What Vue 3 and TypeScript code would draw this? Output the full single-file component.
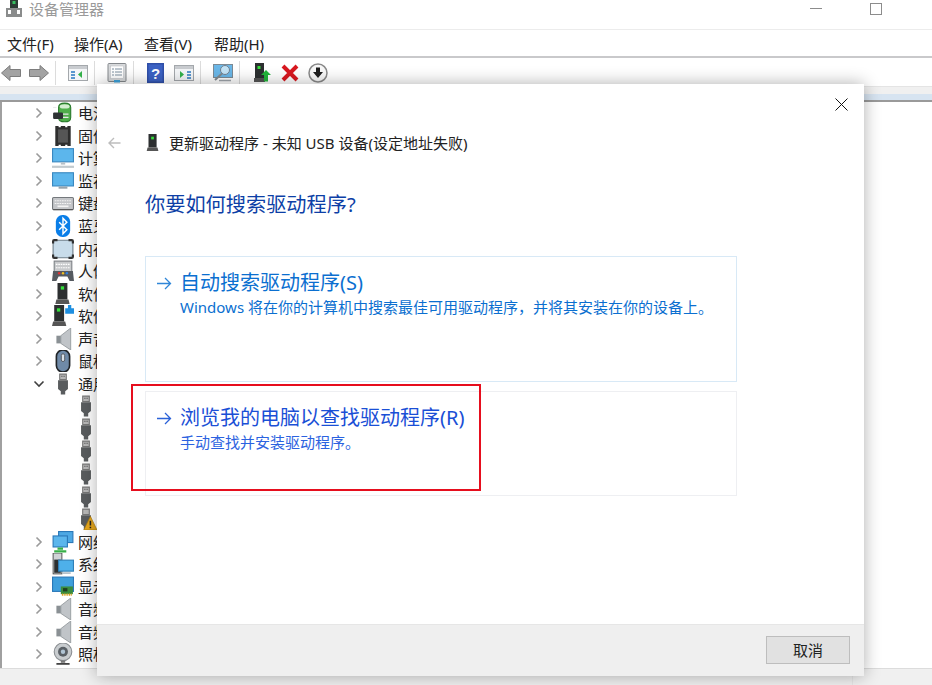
<script setup lang="ts">
interface Row { label: string; icon: string; chevron: 'right' | 'down' | 'none'; child?: boolean }

const menus: string[] = ['文件(F)', '操作(A)', '查看(V)', '帮助(H)']

const parents: [string, string][] = [
  ['电池', 'battery'], ['固件', 'chip'], ['计算机', 'computer'], ['监视器', 'monitor'],
  ['键盘', 'keyboard'], ['蓝牙', 'bluetooth'], ['内存技术设备', 'memory'], ['人体学输入设备', 'hid'],
  ['软件设备', 'device'], ['软件组件', 'component'], ['声音、视频和游戏控制器', 'speaker'], ['鼠标和其他指针设备', 'mouse'],
]
const after: [string, string][] = [
  ['网络适配器', 'network'], ['系统设备', 'system'], ['显示适配器', 'display'],
  ['音频输入和输出', 'speaker'], ['音频处理对象', 'speaker'], ['照相机', 'webcam'],
]
const rows: Row[] = [
  ...parents.map(([label, icon]): Row => ({ label, icon, chevron: 'right' })),
  { label: '通用串行总线控制器', icon: 'usb', chevron: 'down' },
  ...Array.from({ length: 5 }, (): Row => ({ label: 'USB 根集线器', icon: 'usb', chevron: 'none', child: true })),
  { label: '未知 USB 设备', icon: 'usbwarn', chevron: 'none', child: true },
  ...after.map(([label, icon]): Row => ({ label, icon, chevron: 'right' })),
]
</script>

<template>
  <div class="app">
    <svg class="defs" width="0" height="0" aria-hidden="true">
      <defs>
        <symbol id="i-back" viewBox="0 0 20 20"><path d="M0.500 10 9 2.500V6.500h10.500v7H9v4z" fill="#a3a3a3" stroke="#7d7d7d"/></symbol>
        <symbol id="i-fwd" viewBox="0 0 20 20"><path d="M19.500 10 11 2.500V6.500H.5v7H11v4z" fill="#a3a3a3" stroke="#7d7d7d"/></symbol>
        <symbol id="i-paneL" viewBox="0 0 20 20"><rect x=".5" y="2.500" width="19" height="15" fill="#f4f6f8" stroke="#a4a8ac"/><rect x="1" y="3" width="18" height="3" fill="#c9ccd0"/><rect x="3" y="8" width="4" height="2" fill="#5b97cf"/><rect x="3" y="11" width="4" height="2" fill="#5b97cf"/><rect x="3" y="14" width="4" height="2" fill="#5b97cf"/><path d="m10 11.500 4-3.500v7z" fill="#32b04a"/></symbol>
        <symbol id="i-paneR" viewBox="0 0 20 20"><rect x=".5" y="2.500" width="19" height="15" fill="#f4f6f8" stroke="#a4a8ac"/><rect x="1" y="3" width="18" height="3" fill="#c9ccd0"/><rect x="13" y="8" width="4" height="2" fill="#5b97cf"/><rect x="13" y="11" width="4" height="2" fill="#5b97cf"/><rect x="13" y="14" width="4" height="2" fill="#5b97cf"/><path d="m10 11.500-4-3.500v7z" fill="#32b04a"/></symbol>
        <symbol id="i-props" viewBox="0 0 20 20"><rect x="1" y=".5" width="18" height="18" rx="1" fill="#d8dadc" stroke="#85898d"/><rect x="3.500" y="3" width="13" height="12.500" fill="#fff" stroke="#b4b8bc" stroke-width=".5"/><path d="M5 6h2M8 6h7M5 9h2M8 9h7M5 12h2M8 12h7" stroke="#7d8fa0"/><rect x="7" y="17" width="6" height="2.500" fill="#3ea3dc"/></symbol>
        <symbol id="i-help" viewBox="0 0 20 20"><rect x="1" y="0" width="17" height="20" fill="#2f4fa8"/><rect x="2.500" y="1.500" width="14" height="17" fill="#3c62c4"/><text x="9.500" y="16" text-anchor="middle" class="q">?</text></symbol>
        <symbol id="i-scan" viewBox="0 0 20 20"><rect x=".5" y="1.500" width="19" height="13" fill="#6ab7e8" stroke="#7c8a94"/><circle cx="12" cy="7" r="4.500" fill="#c4e4f6" stroke="#708090"/><path d="m9 10.500-7 6.500" stroke="#808a90" stroke-width="2"/><path d="M6 17.500h12" stroke="#a0a6ac" stroke-width="1.500"/></symbol>
        <symbol id="i-update" viewBox="0 0 20 20"><rect x="3" y="0" width="9" height="15" fill="#2c2f30"/><rect x="5.500" y="3" width="3" height="3" fill="#36e03c"/><rect x="2" y="15" width="11" height="4" fill="#555"/><path d="M14 7l5 5h-3v6.500h-4V12H9z" fill="#22b53a"/></symbol>
        <symbol id="i-x" viewBox="0 0 20 20"><path d="m3 3 14 14M17 3 3 17" stroke="#d81820" stroke-width="4"/></symbol>
        <symbol id="i-down" viewBox="0 0 20 20"><circle cx="10" cy="10" r="9" fill="#f8f8f8" stroke="#8a8a8a" stroke-width="1.500"/><path d="M8 4.500h4V9h3l-5 6-5-6h3z" fill="#1c1c1c"/></symbol>

        <symbol id="i-battery" viewBox="0 0 20 20"><path d="M6 5c0-3 3-4 5.500-4S17 2 17 5v9c0 3-3 4-5.500 4S6 17 6 14z" fill="#4fae4a" stroke="#2a7a2c"/><ellipse cx="11.500" cy="4" rx="4.500" ry="2" fill="#d4eed0"/><rect x="1" y="9.500" width="9" height="6" rx="1" fill="#2e3234"/><path d="M10 11h5M10 14h5" stroke="#e8e8e8" stroke-width="1.200"/><path d="M1 5h3" stroke="#e8e8e8"/></symbol>
        <symbol id="i-chip" viewBox="0 0 20 20"><path d="M3 1h3v1h2V1h4v1h2V1h3v18h-3v-1h-2v1H8v-1H6v1H3z" fill="#2e2e2e"/><rect x="5.500" y="4" width="9" height="12" fill="#565656"/></symbol>
        <symbol id="i-computer" viewBox="0 0 20 20"><rect x=".5" y="1.500" width="19" height="12" fill="#5cb6ec" stroke="#3a88c0"/><path d="M8 14h4v2H8z" fill="#b8c0c6"/><path d="M0 17h20v2H0z" fill="#c2cace"/></symbol>
        <symbol id="i-monitor" viewBox="0 0 20 20"><rect x=".5" y="2.500" width="19" height="12" fill="#5cb6ec" stroke="#3a88c0"/><path d="M6 15h8v2H6z" fill="#98a4ac"/></symbol>
        <symbol id="i-keyboard" viewBox="0 0 20 20"><rect x=".5" y="5" width="19" height="11" rx="1" fill="#c4c6c9" stroke="#74787c"/><path d="M2.500 8h15M2.500 10.500h15" stroke="#f4f4f4" stroke-dasharray="1.500 .7"/><path d="M5 13h10" stroke="#f4f4f4" stroke-width="1.500"/><path d="M1 16h18" stroke="#555"/></symbol>
        <symbol id="i-bluetooth" viewBox="0 0 20 20"><rect x="3.500" y="0" width="13" height="20" rx="6" fill="#0a7ee8"/><path d="m6.500 6.500 7 7L10 17V3l3.500 3.500-7 7" fill="none" stroke="#fff" stroke-width="1.300"/></symbol>
        <symbol id="i-memory" viewBox="0 0 20 20"><rect x="1" y="2" width="18" height="16" rx="2" fill="#c8dcea" stroke="#6f7f8a"/><path d="M1 5V3q0-1 1-1h3M15 2h3q1 0 1 1v2M19 15v2q0 1-1 1h-3M5 18H2q-1 0-1-1v-2" fill="none" stroke="#333" stroke-width="2"/></symbol>
        <symbol id="i-hid" viewBox="0 0 20 20"><rect x="2" y="1" width="16" height="10" fill="#c8cacc" stroke="#7e8286"/><path d="M3.500 4h13M3.500 7h13" stroke="#fff" stroke-dasharray="1.500 .7"/><path d="M1 10h18l1 9h-4l-2-4H6l-2 4H0z" fill="#555a60"/><circle cx="6.500" cy="12" r="1.100" fill="#e03030"/><circle cx="10" cy="12" r="1.100" fill="#f0c020"/><circle cx="13.500" cy="12" r="1.100" fill="#3080e0"/></symbol>
        <symbol id="i-device" viewBox="0 0 20 20"><rect x="5" y="0" width="9" height="15" fill="#2c2f30"/><rect x="8" y="3" width="3" height="3" fill="#36e03c"/><path d="M4 15h11l1 4H3z" fill="#555"/></symbol>
        <symbol id="i-component" viewBox="0 0 20 20"><rect x="2" y="0" width="9" height="15" fill="#2c2f30"/><rect x="4.500" y="3" width="3" height="3" fill="#36e03c"/><path d="M1 15h11l1 4H0z" fill="#555"/><path d="M12 3h2.500V0h3v3H20v5h-8z" fill="#1e8fe0"/></symbol>
        <symbol id="i-speaker" viewBox="0 0 20 20"><path d="M4 7h4v7H4z" fill="#8a9094"/><path d="M8 7l9-7v20l-9-6z" fill="#c0c4c8" stroke="#8a9094" stroke-width=".7"/></symbol>
        <symbol id="i-mouse" viewBox="0 0 20 20"><rect x="4" y="0" width="12" height="20" rx="6" fill="#6f8aa8" stroke="#202428" stroke-width="1.500"/><rect x="8.500" y="3.500" width="3" height="7" rx="1.500" fill="#d8e0e8" stroke="#333" stroke-width=".6"/></symbol>
        <symbol id="i-usb" viewBox="0 0 20 20"><path d="M7 1h6v5H7z" fill="#b8b8b8" stroke="#777"/><path d="M8.500 3h1M10.500 3h1" stroke="#444"/><path d="M5.500 6.500h9v8l-2.500 2v3H8v-3l-2.500-2z" fill="#595c5e"/></symbol>
        <symbol id="i-usbwarn" viewBox="0 0 20 20"><path d="M7 1h6v5H7z" fill="#b8b8b8" stroke="#777"/><path d="M5.500 6.500h9v8l-2.500 2v3H8v-3l-2.500-2z" fill="#595c5e"/><path d="M14 7.500 20 20H8z" fill="#e8a81c" stroke="#a87a10" stroke-width=".6"/><path d="M14 11.500v4.500M14 17v1.500" stroke="#222" stroke-width="1.400"/></symbol>
        <symbol id="i-network" viewBox="0 0 20 20"><rect x="6" y="0.500" width="13" height="10" fill="#4da8e4" stroke="#2a78b8"/><rect x="1" y="4.500" width="13" height="10" fill="#5cb6ec" stroke="#2a78b8"/><path d="M5 15h5v2H5zM2 17.500h11v2H2z" fill="#38b048"/></symbol>
        <symbol id="i-system" viewBox="0 0 20 20"><rect x="1" y="0" width="8" height="19" fill="#d0d3d6" stroke="#444" stroke-width=".8"/><rect x="2" y="6" width="6" height="12" fill="#2c2f30"/><rect x="6" y="6.500" width="13.500" height="10" fill="#4eb0ea" stroke="#3080b8"/><path d="M9 17.500h8v1.500H9z" fill="#b0bcc4"/></symbol>
        <symbol id="i-display" viewBox="0 0 20 20"><rect x=".5" y="1" width="19" height="13" fill="#3f9fdc" stroke="#2a78b8"/><rect x="8" y="9.500" width="11" height="7" fill="#3a8c3e"/><rect x="10" y="11" width="4" height="3" fill="#1f3e22"/><path d="M9 17h9" stroke="#d8a020" stroke-width="2" stroke-dasharray="1 .6"/></symbol>
        <symbol id="i-webcam" viewBox="0 0 20 20"><circle cx="10" cy="8" r="8" fill="#c8cccf" stroke="#8a8e92"/><circle cx="10" cy="8" r="4.500" fill="#5a6066"/><circle cx="10" cy="8" r="2" fill="#b0c4d4"/><path d="M8 16h4v2H8z" fill="#777"/><path d="M4 19h12" stroke="#333" stroke-width="1.500"/></symbol>
      </defs>
    </svg>

    <header class="titlebar">
      <svg class="title-icon" width="18" height="19" viewBox="0 0 18 19">
        <rect x="5" y="-3" width="8" height="11" fill="#2c3c34"/>
        <rect x="7.500" y="1" width="3" height="3" fill="#36c060"/>
        <rect x="1" y="8" width="16" height="9" fill="#8a8c8c"/>
        <rect x="3" y="10" width="3" height="4" fill="#fff"/>
        <rect x="12" y="10" width="3" height="4" fill="#fff"/>
      </svg>
      <span class="title-text">设备管理器</span>
      <div class="win-ctrls">
        <i class="win-min"></i>
        <i class="win-max"></i>
      </div>
    </header>

    <nav class="menubar">
      <span v-for="m in menus" :key="m" class="menu">{{ m }}</span>
    </nav>

    <div class="toolbar">
      <div class="tb-group first">
        <svg class="tb"><use href="#i-back" /></svg>
        <svg class="tb"><use href="#i-fwd" /></svg>
      </div>
      <div class="tb-group">
        <svg class="tb"><use href="#i-paneL" /></svg>
      </div>
      <div class="tb-group">
        <svg class="tb"><use href="#i-props" /></svg>
      </div>
      <div class="tb-group">
        <svg class="tb"><use href="#i-help" /></svg>
        <svg class="tb"><use href="#i-paneR" /></svg>
      </div>
      <div class="tb-group">
        <svg class="tb"><use href="#i-scan" /></svg>
      </div>
      <div class="tb-group last">
        <svg class="tb"><use href="#i-update" /></svg>
        <svg class="tb"><use href="#i-x" /></svg>
        <svg class="tb"><use href="#i-down" /></svg>
      </div>
    </div>

    <div class="strip"></div>
    <div class="band"></div>

    <div class="tree">
      <div v-for="(r, i) in rows" :key="i" class="row" :class="{ child: r.child }">
        <span class="chev">
          <svg v-if="r.chevron === 'right'" width="8" height="12" viewBox="0 0 8 12"><path d="m1.500 1.500 4.500 4.500-4.500 4.500" fill="none" stroke="#9a9a9a" stroke-width="1.600"/></svg>
          <svg v-else-if="r.chevron === 'down'" width="12" height="8" viewBox="0 0 12 8"><path d="m1.500 1.500 4.500 4.500 4.500-4.500" fill="none" stroke="#404040" stroke-width="1.600"/></svg>
        </span>
        <svg class="row-icon"><use :href="'#i-' + r.icon" /></svg>
        <span class="row-label">{{ r.label }}</span>
      </div>
    </div>

    <footer class="status">
      <span class="status-pane"></span>
    </footer>

    <section class="dialog">
      <button class="close" aria-label="关闭">
        <svg width="13" height="13" viewBox="0 0 13 13"><path d="m.5.5 12 12M12.500.5l-12 12" stroke="#111" stroke-width="1"/></svg>
      </button>
      <div class="dlg-main">
        <div class="dlg-head">
          <svg class="back" width="13" height="12" viewBox="0 0 13 12"><path d="M12.500 6H1M6 1 1 6l5 5" fill="none" stroke="#bdbdbd" stroke-width="1.400"/></svg>
          <svg class="head-icon"><use href="#i-device" /></svg>
          <span class="head-text">更新驱动程序 - 未知 USB 设备(设定地址失败)</span>
        </div>
        <h1 class="heading">你要如何搜索驱动程序?</h1>
        <div class="card card-a">
          <svg class="arrow" width="16" height="13" viewBox="0 0 16 13"><path d="M1 6.500h13.500M9 1l5.500 5.500L9 12" fill="none" stroke="#2f86d8" stroke-width="1.300"/></svg>
          <div class="title-a">自动搜索驱动程序(S)</div>
          <div class="sub-a">Windows 将在你的计算机中搜索最佳可用驱动程序，并将其安装在你的设备上。</div>
        </div>
        <div class="card card-b">
          <svg class="arrow" width="16" height="13" viewBox="0 0 16 13"><path d="M1 6.500h13.500M9 1l5.500 5.500L9 12" fill="none" stroke="#2b62d8" stroke-width="1.300"/></svg>
          <div class="title-b">浏览我的电脑以查找驱动程序(R)</div>
          <div class="sub-b">手动查找并安装驱动程序。</div>
        </div>
      </div>
      <div class="dlg-foot">
        <button class="cancel">取消</button>
      </div>
    </section>

    <div class="callout"></div>
  </div>
</template>

<style scoped>
.app {
  position: relative;
  width: 932px;
  height: 685px;
  overflow: hidden;
  display: flex;
  flex-direction: column;
  background: #fff;
  font-family: "Noto Sans", "Noto Sans CJK SC", sans-serif;
  color: #1c1c1c;
}
.defs { position: absolute; }
.titlebar {
  height: 29px;
  flex: none;
  display: flex;
  align-items: flex-start;
  border-bottom: 1px solid #ececec;
}
.title-icon { margin-left: 5px; flex: none; }
.title-text {
  margin-left: 6px;
  font-size: 15px;
  line-height: 19px;
  color: #9a9a9a;
}
.win-ctrls { margin-left: auto; display: flex; align-items: flex-start; }
.win-min {
  display: block;
  width: 12px;
  height: 1px;
  margin-top: 8px;
  background: #8c8c8c;
}
.win-max {
  display: block;
  width: 12px;
  height: 12px;
  margin: 3px 50px 0 48px;
  border: 1px solid #8c8c8c;
  box-sizing: border-box;
}
.menubar {
  height: 26px;
  flex: none;
  display: flex;
  align-items: center;
  padding: 2px 0 0 7px;
  box-sizing: border-box;
}
.menu {
  width: 70px;
  font-size: 15px;
  line-height: 20px;
  white-space: nowrap;
  color: #222;
}
.menu:first-child { width: 67px; }
.toolbar {
  height: 30px;
  flex: none;
  box-sizing: border-box;
  border-top: 2px solid #c9c9cb;
  padding-top: 2px;
  display: flex;
  align-items: center;
}
.tb-group {
  display: flex;
  align-items: center;
  gap: 8px;
  height: 24px;
  padding: 0 6px 0 12px;
  border-right: 1px solid #dcdcdc;
}
.tb-group.first { padding-left: 1px; }
.tb-group.last { border-right: 0; }
.tb { width: 20px; height: 20px; flex: none; }
.strip {
  height: 8px;
  flex: none;
  box-sizing: border-box;
  background: #f0f0f0;
  border-top: 1px solid #e4e4e4;
}
.band {
  height: 8px;
  flex: none;
  box-sizing: border-box;
  background: #d7e4f1;
  border-bottom: 2px solid #9a9a9a;
}
.tree {
  flex: 1;
  min-height: 0;
  border-left: 2px solid #a0a0a0;
  overflow: hidden;
}
.row {
  height: 22.55px;
  display: flex;
  align-items: center;
  padding-left: 31px;
  white-space: nowrap;
}
.chev {
  width: 12px;
  display: flex;
  justify-content: center;
  flex: none;
}
.row-icon { width: 22px; height: 22px; margin-left: 7px; flex: none; }
.row.child .row-icon { margin-left: 30px; }
.row-label {
  margin-left: 4px;
  font-size: 15px;
  line-height: 20px;
  color: #222;
}
.status {
  height: 17px;
  flex: none;
  box-sizing: border-box;
  background: #f0f0f0;
  border-top: 1px solid #dcdcdc;
  display: flex;
  justify-content: flex-end;
}
.status-pane {
  width: 79px;
  border-left: 1px solid #e6e6e6;
}
.dialog {
  position: absolute;
  left: 97px;
  top: 84px;
  width: 767px;
  height: 592px;
  background: #fff;
  box-shadow: 0 0 16px rgba(0, 0, 0, 0.32);
  display: flex;
  flex-direction: column;
}
.close {
  position: absolute;
  right: 16px;
  top: 14px;
  width: 13px;
  height: 13px;
  padding: 0;
  border: 0;
  background: none;
  display: flex;
}
.dlg-main {
  flex: 1;
  padding: 49px 127px 0 11px;
}
.dlg-head {
  height: 20px;
  display: flex;
  align-items: center;
}
.back { flex: none; }
.head-icon { width: 18px; height: 18px; margin-left: 23px; flex: none; }
.head-text {
  margin-left: 7px;
  font-size: 15px;
  line-height: 20px;
  color: #222;
  white-space: nowrap;
}
.heading {
  margin: 37px 0 0 37px;
  font-size: 20.200px;
  line-height: 28px;
  font-weight: 400;
  color: #0d3fa6;
}
.card {
  position: relative;
  margin-left: 37px;
  box-sizing: border-box;
  padding: 12px 12px 0 34px;
}
.card-a {
  margin-top: 38px;
  height: 126px;
  border: 1px solid #d8e9f6;
}
.card-b {
  margin-top: 9px;
  height: 105px;
  border: 1px solid #eeeff2;
}
.arrow { position: absolute; left: 10px; top: 20px; }
.title-a, .title-b {
  font-size: 20px;
  line-height: 28px;
  white-space: nowrap;
}
.sub-a, .sub-b {
  font-size: 15px;
  line-height: 20px;
  white-space: nowrap;
}
.title-a, .sub-a { color: #0b6fd0; }
.title-b { color: #1a4fd6; }
.sub-b { color: #2b62e0; }
.dlg-foot {
  height: 52px;
  flex: none;
  box-sizing: border-box;
  background: #efefef;
  border-top: 1px solid #e6e6e6;
  display: flex;
  align-items: center;
  justify-content: flex-end;
  padding: 0 14px 2px 0;
}
.cancel {
  width: 84px;
  height: 28px;
  padding: 0;
  box-sizing: border-box;
  background: #e1e1e1;
  border: 1px solid #bdbdbd;
  font-family: inherit;
  font-size: 15px;
  line-height: 20px;
  color: #222;
}
.callout {
  position: absolute;
  left: 131px;
  top: 384px;
  width: 350px;
  height: 107px;
  box-sizing: border-box;
  border: 2px solid #e60e1e;
}
</style>

<style>
.q { font: 700 15px "Liberation Sans", sans-serif; fill: #fff; }
</style>
